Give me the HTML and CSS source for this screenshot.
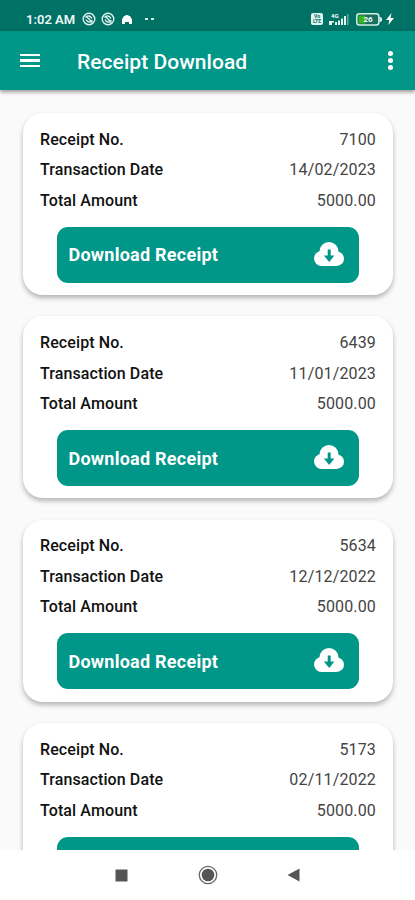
FILE: index.html
```html
<!DOCTYPE html>
<html lang="en">
<head>
    <meta charset="UTF-8">
    <meta name="viewport" content="width=device-width, initial-scale=1.0">
    <title>Receipt Download</title>
    <link rel="stylesheet" href="styles.css">
</head>
<body>
    <svg class="sprite" aria-hidden="true">
        <symbol id="cloud" viewBox="0 0 30 24">
            <g fill="#fff">
                <circle cx="7.500" cy="16.500" r="7.500"/>
                <circle cx="15" cy="9.500" r="9.500"/>
                <circle cx="22.700" cy="16.700" r="7.300"/>
                <path d="M7.500 12h15v12h-15z"/>
            </g>
            <path fill="#009688" d="M13.700 7.500h3v6h3.700L15.200 20l-5.300-6.500h3.800z"/>
        </symbol>
        <symbol id="sync" viewBox="0 0 14 14">
            <g fill="none" stroke="#e3f3f0" stroke-width="1.400">
                <circle cx="7" cy="7" r="5.800"/>
                <path d="M3.500 5.500c2-2.500 5-2 6.500 1M10.500 8.500c-2 2.500-5 2-6.500-1M4 4l6.500 6.500"/>
            </g>
        </symbol>
    </svg>

    <div class="status-bar">
        <span class="time">1:02 AM</span>
        <svg class="sync" width="14" height="14"><use href="#sync"/></svg>
        <svg class="sync" width="14" height="14"><use href="#sync"/></svg>
        <svg class="home" width="10" height="9" viewBox="0 0 10 9"><path fill="#fff" d="M0 4.500 2 1h1l1-1h2l1 1h1l2 3.500V9H7V7H3V9H0z"/></svg>
        <span class="dots"><i></i><i></i></span>
        <div class="status-right">
            <span class="volte"><b>Vo</b><b>LTE</b></span>
            <svg class="signal" width="20" height="13" viewBox="0 0 20 13">
                <text x="2" y="5" fill="#fff" font-size="6" font-weight="700">4G</text>
                <path fill="#e3f3f0" d="M0 8h5v1.500H3V12H0zM6 9h2v3H6zM9 7.500h2V12H9zM12 5.500h2V12h-2zM15 3h2v9h-2z"/>
                <path fill="#5fa99f" d="M18 1h1.500v11H18z"/>
            </svg>
            <svg class="battery" width="26" height="13" viewBox="0 0 26 13">
                <rect x=".8" y=".8" width="22" height="11.200" rx="2.500" fill="#176f60" stroke="#d5eee6" stroke-width="1.500"/>
                <path fill="#35b51c" d="M2.500 2.500h7v8h-7z"/>
                <path fill="#d5eee6" d="M23.500 3.500 26 5v3l-2.500 1.500z"/>
                <text x="12" y="9.400" fill="#fff" font-size="8" font-weight="700" text-anchor="middle">26</text>
            </svg>
            <svg class="bolt" width="8" height="12" viewBox="0 0 8 12"><path fill="#fff" d="M5.500 0 0 7h3.300L2.300 12 8 5H4.500z"/></svg>
        </div>
    </div>

    <header>
        <div class="menu"><i></i><i></i><i></i></div>
        <h1>Receipt Download</h1>
        <div class="more"><i></i><i></i><i></i></div>
    </header>

    <main>
        <div class="card">
            <div class="row"><span class="label">Receipt No.</span><span>7100</span></div>
            <div class="row"><span class="label">Transaction Date</span><span>14/02/2023</span></div>
            <div class="row"><span class="label">Total Amount</span><span>5000.00</span></div>
            <button>Download Receipt <svg width="30" height="24"><use href="#cloud"/></svg></button>
        </div>
        <div class="card">
            <div class="row"><span class="label">Receipt No.</span><span>6439</span></div>
            <div class="row"><span class="label">Transaction Date</span><span>11/01/2023</span></div>
            <div class="row"><span class="label">Total Amount</span><span>5000.00</span></div>
            <button>Download Receipt <svg width="30" height="24"><use href="#cloud"/></svg></button>
        </div>
        <div class="card">
            <div class="row"><span class="label">Receipt No.</span><span>5634</span></div>
            <div class="row"><span class="label">Transaction Date</span><span>12/12/2022</span></div>
            <div class="row"><span class="label">Total Amount</span><span>5000.00</span></div>
            <button>Download Receipt <svg width="30" height="24"><use href="#cloud"/></svg></button>
        </div>
        <div class="card">
            <div class="row"><span class="label">Receipt No.</span><span>5173</span></div>
            <div class="row"><span class="label">Transaction Date</span><span>02/11/2022</span></div>
            <div class="row"><span class="label">Total Amount</span><span>5000.00</span></div>
            <button aria-label="Download Receipt"></button>
        </div>
    </main>

    <footer>
        <svg width="13" height="13" viewBox="0 0 13 13"><path fill="#555" d="M.5.500h12v12H.5z"/></svg>
        <svg width="20" height="20" viewBox="0 0 20 20">
            <circle cx="10" cy="10" r="8.700" fill="none" stroke="#666" stroke-width="1.300"/>
            <circle cx="10" cy="10" r="6.300" fill="#555"/>
        </svg>
        <svg width="13" height="14" viewBox="0 0 13 14"><path fill="#555" d="M12.500.500v13L.5 7z"/></svg>
    </footer>
</body>
</html>
```

FILE: styles.css
```css
:root {
    --primary-color: #009688;
    --primary-dark: #007165;
    --page-bg: #fafafa;
}

* {
    margin: 0;
    padding: 0;
    box-sizing: border-box;
    font-family: Roboto, sans-serif;
}

body {
    background-color: var(--page-bg);
    height: 100vh;
    display: flex;
    flex-direction: column;
    overflow: hidden;
}

.sprite {
    display: none;
}

.status-bar {
    flex: none;
    display: flex;
    align-items: center;
    height: 31px;
    padding: 7px 21px 0 26px;
    background: var(--primary-dark);
    color: #eef8f6;
}

.time {
    width: 50px;
    font-size: 13px;
    font-weight: 600;
    white-space: nowrap;
}

.sync {
    margin-left: 5px;
}

.sync:first-of-type {
    margin-left: 6px;
}

.home {
    margin-left: 7px;
}

.dots {
    display: flex;
    gap: 3px;
    margin-left: 13px;
}

.dots i {
    width: 3px;
    height: 2px;
    background: #d5eee6;
}

.status-right {
    display: flex;
    align-items: center;
    margin-left: auto;
}

.volte {
    display: flex;
    flex-direction: column;
    align-items: center;
    justify-content: center;
    width: 12px;
    height: 12px;
    border-radius: 2px;
    background: #e3f3f0;
    color: var(--primary-dark);
}

.volte b {
    font-size: 5px;
    line-height: 5px;
}

.signal {
    margin-left: 6px;
}

.battery {
    margin-left: 7px;
}

.bolt {
    margin-left: 4px;
}

header {
    flex: none;
    display: flex;
    align-items: center;
    height: 59px;
    padding: 0 22px 0 20px;
    background: var(--primary-color);
    color: white;
    box-shadow: 0 2px 4px rgba(0,0,0,0.4);
    z-index: 1;
}

.menu {
    display: flex;
    flex-direction: column;
    gap: 3px;
    width: 20px;
}

.menu i {
    height: 2.5px;
    background: white;
}

h1 {
    margin: 2px 0 0 37px;
    font-size: 21px;
    font-weight: 500;
    letter-spacing: 0.05px;
}

.more {
    display: flex;
    flex-direction: column;
    gap: 2px;
    margin-left: auto;
}

.more i {
    width: 5px;
    height: 5px;
    border-radius: 50%;
    background: white;
}

main {
    flex: 1;
    min-height: 0;
    overflow: hidden;
    display: flex;
    flex-direction: column;
    gap: 21.4px;
    padding: 23px 22px 0 23px;
}

.card {
    flex: none;
    height: 182px;
    padding: 11.7px 17px 0;
    border-radius: 20px;
    background: white;
    box-shadow: 0 3px 5px rgba(0,0,0,0.28);
}

.row {
    display: flex;
    justify-content: space-between;
    height: 30.5px;
    font-size: 16px;
    line-height: 30.5px;
    color: #444;
    letter-spacing: 0.15px;
}

.label {
    font-weight: 500;
    color: #111;
    letter-spacing: 0.1px;
}

button {
    display: flex;
    justify-content: space-between;
    align-items: center;
    width: 302px;
    height: 56px;
    margin: 10.5px 0 0 17px;
    padding: 0 15px 0 11.5px;
    border: none;
    border-radius: 11px;
    background: var(--primary-color);
    color: white;
    font-size: 18px;
    font-weight: 700;
    letter-spacing: 0.25px;
}

button svg {
    margin-bottom: 2px;
}

footer {
    flex: none;
    display: flex;
    justify-content: space-between;
    align-items: center;
    height: 50px;
    padding: 0 115px;
    background: white;
}
```
